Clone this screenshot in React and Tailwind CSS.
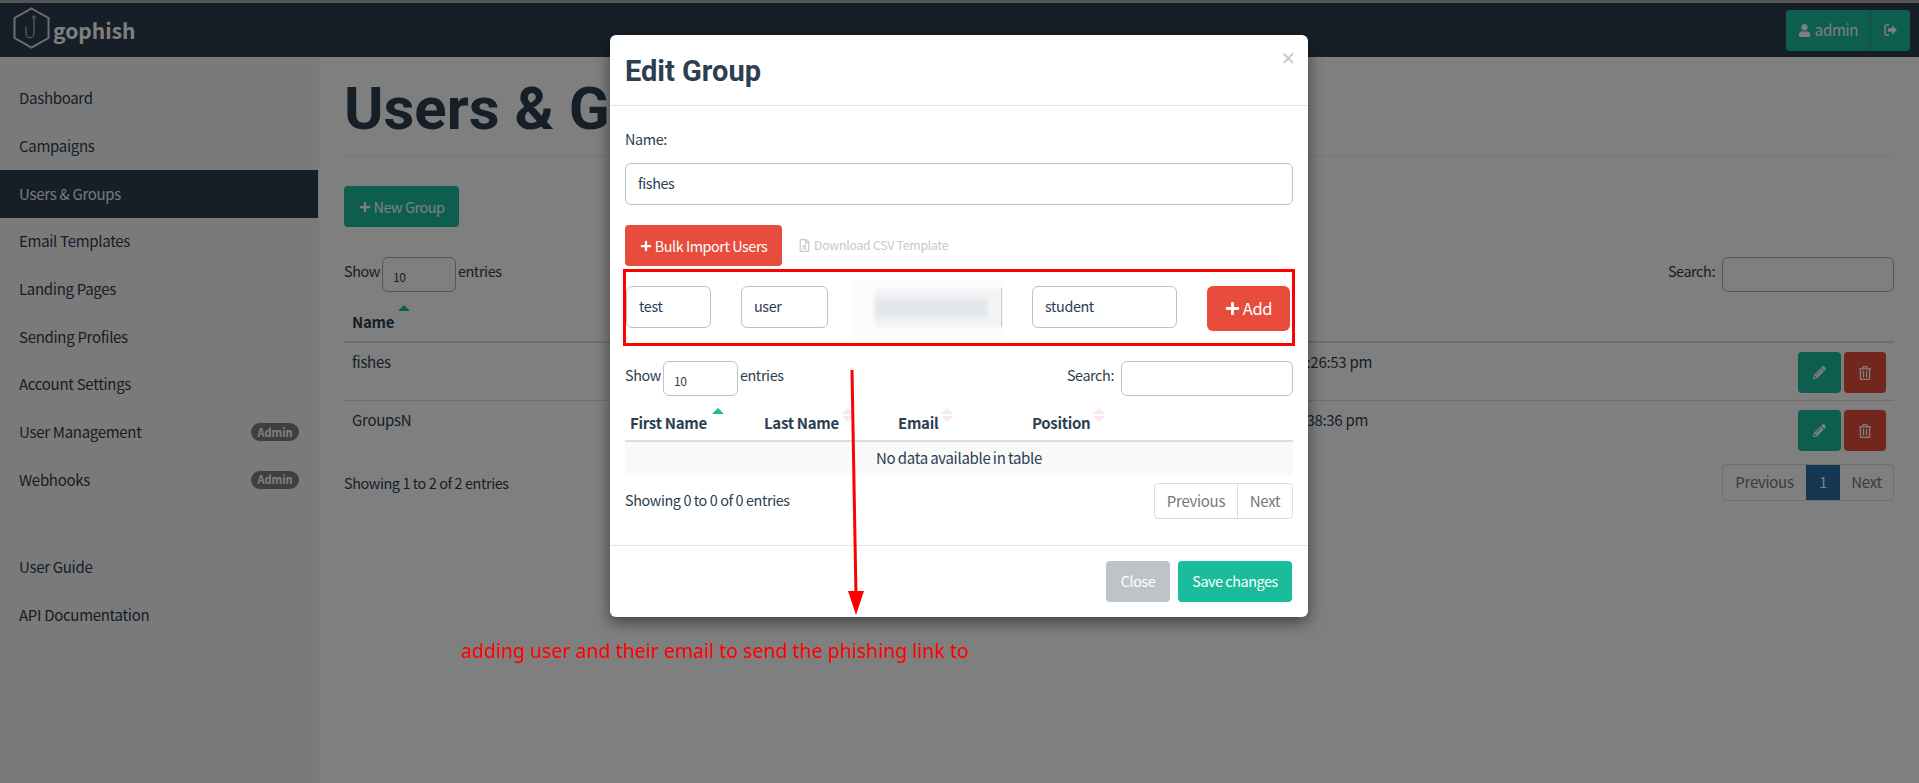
import React from "react";
import { FaPlus, FaUser, FaPencilAlt, FaRegTrashAlt, FaRegFileExcel } from "react-icons/fa";

const ss = "font-['Noto_Sans_CJK_SC','Noto_Sans',sans-serif]";
const base = "text-[15px] tracking-[-0.3px]";
const label = "text-[14.4px] tracking-[-0.4px]";
const btn = "text-[14.4px] tracking-[-0.45px]";

function Logo() {
  return (
    <svg className="mb-[4px]" width="37" height="42" viewBox="0 0 37 42" fill="none" stroke="#dcdcdc">
      <path d="M18.5 1.5 L35.5 11 V31 L18.5 40.5 L1.5 31 V11 Z" strokeWidth="2" />
      <path d="M21 11 V27 C21 32 13 32 13 27 V20" strokeWidth="1" />
      <circle cx="21" cy="10" r="1.3" strokeWidth="0.8" />
    </svg>
  );
}

function LogoutIcon() {
  return (
    <svg width="15" height="14" viewBox="0 0 15 14" fill="none">
      <path d="M6 2H3.5A1.5 1.5 0 0 0 2 3.5v7A1.5 1.5 0 0 0 3.5 12H6" stroke="#ffffff" strokeWidth="1.5" />
      <path d="M5 5.2H9V2.5L14 7L9 11.5V8.8H5Z" fill="#ffffff" />
    </svg>
  );
}

function SortUp({ className = "" }) {
  return <span className={`inline-block w-0 h-0 border-x-[6px] border-x-transparent border-b-[6px] ${className}`} />;
}

function SortBoth() {
  return (
    <span className="absolute -top-[2px] flex flex-col gap-[2px]">
      <span className="w-0 h-0 border-x-[6px] border-x-transparent border-b-[6px] border-b-[#fbe4f5]" />
      <span className="w-0 h-0 border-x-[6px] border-x-transparent border-t-[6px] border-t-[#fbe4f5]" />
    </span>
  );
}

const navTop = ["Dashboard", "Campaigns", "Users & Groups", "Email Templates", "Landing Pages", "Sending Profiles", "Account Settings", "User Management", "Webhooks"];

function Sidebar() {
  return (
    <aside className={`w-[319px] shrink-0 bg-[#f5f5f5] border-r border-[#eeeeee] pt-[17.6px] text-[#2c3e50] ${base}`}>
      {navTop.map((n) => (
        <div key={n} className={`h-[47.7px] flex items-center pl-[19px] pr-[19px] justify-between ${n === "Users & Groups" ? "bg-[#2c3e50] text-[#ecf0f1]" : ""}`}>
          <span>{n}</span>
          {(n === "User Management" || n === "Webhooks") && (
            <span className="w-[48px] h-[18px] rounded-[9px] bg-[#7f7f7f] text-white text-[11px] tracking-normal font-bold flex items-center justify-center leading-none">Admin</span>
          )}
        </div>
      ))}
      <div className="h-[40px]" />
      {["User Guide", "API Documentation"].map((n) => (
        <div key={n} className="h-[47.7px] flex items-center pl-[19px]">{n}</div>
      ))}
    </aside>
  );
}

function Row({ name, date, pad, last }) {
  return (
    <div className={`h-[58px] flex ${last ? "" : "border-b border-[#dddddd]"}`}>
      <div className="w-[960px] pl-[8px] pt-[7.5px]">{name}</div>
      <div className={`w-[68px] pt-[7.5px] whitespace-nowrap flex justify-end ${pad}`}>{date}</div>
      <div className="flex-1 flex justify-end gap-[3px] pt-[9px] pr-[8px]">
        <div className="w-[43px] h-[41px] rounded-[4px] bg-[#1abc9c] flex items-center justify-center text-white"><FaPencilAlt size={13} /></div>
        <div className="w-[42px] h-[41px] rounded-[4px] bg-[#e74c3c] flex items-center justify-center text-white"><FaRegTrashAlt size={14} /></div>
      </div>
    </div>
  );
}

function Main() {
  return (
    <main className={`flex-1 pl-[25px] pr-[25px] text-[#2c3e50] ${base}`}>
      <h1 className="font-['Roboto',sans-serif] font-bold text-[60px] tracking-normal leading-[66px] h-[79px] pt-[19px] box-content border-b border-[#eeeeee] text-[#2c3e50] overflow-hidden whitespace-nowrap">Users &amp; Groups</h1>
      <button className={`mt-[30px] w-[115px] h-[41px] rounded-[4px] bg-[#1abc9c] text-white flex items-center justify-center gap-[3px] ${btn}`}>
        <FaPlus size={12} />New Group
      </button>
      <div className={`mt-[30px] flex justify-between h-[35px] ${label}`}>
        <div className="flex items-start gap-[2px]">
          <span className="leading-[22px] pt-[3px]">Show</span>
          <div className="w-[74px] h-[35px] border border-[#aaaaaa] rounded-[6px] pl-[10px] pt-[9px] text-[12px] leading-[20px]">10</div>
          <span className="leading-[22px] pt-[3px]">entries</span>
        </div>
        <div className="flex items-start gap-[7px]">
          <span className="leading-[22px] pt-[3px]">Search:</span>
          <div className="w-[172px] h-[35px] border border-[#aaaaaa] rounded-[6px]" />
        </div>
      </div>
      <div className="mt-[15px] h-[31px] border-b-2 border-[#dddddd] relative font-bold pl-[8px] leading-[24px] pt-[3px] box-content">
        Name
        <SortUp className="absolute left-[54px] top-[-2px] border-b-[#1abc9c]" />
      </div>
      <Row name="fishes" date=":26:53 pm" pad="" />
      <Row name="GroupsN" date="38:36 pm" pad="pr-[4px]" last />
      <div className="flex justify-between items-center h-[37px] mt-[5px]">
        <span className={label}>Showing 1 to 2 of 2 entries</span>
        <div className="flex h-[37px] border border-[#dddddd] rounded-[4px] text-[#777777]">
          <span className="w-[83px] flex items-center justify-center">Previous</span>
          <span className="w-[34px] flex items-center justify-center bg-[#2c6ea8] text-white">1</span>
          <span className="w-[53px] flex items-center justify-center">Next</span>
        </div>
      </div>
    </main>
  );
}

function Input({ className = "", children }) {
  return <div className={`border border-[#bdc3c7] rounded-[6px] flex items-center pl-[12px] pb-[2px] bg-white text-[#2c3e50] ${label} ${className}`}>{children}</div>;
}

function Modal() {
  return (
    <div className={`absolute left-[610px] top-[35px] w-[698px] h-[582px] bg-white rounded-[6px] shadow-[0_5px_15px_rgba(0,0,0,0.5)] text-[#2c3e50] ${base} ${ss}`}>
      <div className="h-[71px] border-b border-[#e5e5e5] flex justify-between items-start pl-[15px] pr-[12px]">
        <h4 className="font-['Roboto',sans-serif] font-bold text-[29px] tracking-normal leading-[32px] mt-[20px]">Edit Group</h4>
        <span className="font-bold text-[#c4c4c4] text-[16px] leading-none mt-[14px]">×</span>
      </div>
      <div className="px-[15px]">
        <div className={`pt-[22px] leading-[22px] ${label}`}>Name:</div>
        <Input className="mt-[13px] h-[42px]">fishes</Input>
        <div className={`flex items-center mt-[20px] ${btn}`}>
          <button className="w-[157px] h-[41px] rounded-[4px] bg-[#e74c3c] text-white flex items-center justify-center gap-[3px]"><FaPlus size={12} />Bulk Import Users</button>
          <span className="ml-[16px] flex items-center gap-[3px] text-[12.2px] tracking-[-0.2px] text-[#c8c8c8]"><FaRegFileExcel size={13} />Download CSV Template</span>
        </div>
        <div className="flex items-start mt-[20px] h-[42px]">
          <Input className="w-[85px] h-[42px] ml-[1px]">test</Input>
          <Input className="w-[87px] h-[42px] ml-[30px]">user</Input>
          <Input className="w-[149px] h-[42px] ml-[25px]" />
          <Input className="w-[145px] h-[42px] ml-[30px]">student</Input>
          <button className="w-[83px] h-[45px] ml-[30px] rounded-[6px] bg-[#e74c3c] text-white text-[16.5px] tracking-[-0.4px] flex items-center justify-center gap-[3px]"><FaPlus size={15} />Add</button>
        </div>
        <div className={`flex justify-between mt-[33px] h-[35px] ${label}`}>
          <div className="flex items-start gap-[2px]">
            <span className="leading-[22px] pt-[3px]">Show</span>
            <div className="w-[75px] h-[35px] border border-[#bdc3c7] rounded-[6px] pl-[10px] pt-[9px] text-[12px] leading-[20px]">10</div>
            <span className="leading-[22px] pt-[3px]">entries</span>
          </div>
          <div className="flex items-start gap-[7px]">
            <span className="leading-[22px] pt-[3px]">Search:</span>
            <div className="w-[172px] h-[35px] border border-[#bdc3c7] rounded-[6px]" />
          </div>
        </div>
        <div className="mt-[14px] h-[30px] border-b-2 border-[#dddddd] grid grid-cols-[134px_134px_134px_1fr] font-bold pl-[5px] leading-[26px] box-content">
          <span className="relative">First Name<SortUp className="absolute left-[82px] top-[-2px] border-b-[#1abc9c]" /></span>
          <span className="relative">Last Name<span className="absolute left-[78px] top-0"><SortBoth /></span></span>
          <span className="relative">Email<span className="absolute left-[43px] top-0"><SortBoth /></span></span>
          <span className="relative">Position<span className="absolute left-[61px] top-0"><SortBoth /></span></span>
        </div>
        <div className="h-[33px] bg-[#f9f9f9] flex items-center justify-center [word-spacing:-0.7px]">No data available in table</div>
        <div className="flex justify-between items-center mt-[8px] h-[36px]">
          <span className={`pb-[2px] ${label}`}>Showing 0 to 0 of 0 entries</span>
          <div className="flex h-[36px] border border-[#dddddd] rounded-[4px] text-[#777777]">
            <span className="w-[83px] flex items-center justify-center border-r border-[#dddddd]">Previous</span>
            <span className="w-[54px] flex items-center justify-center">Next</span>
          </div>
        </div>
      </div>
      <div className={`mt-[26px] border-t border-[#e5e5e5] flex justify-end gap-[8px] pr-[16px] pt-[15px] ${btn}`}>
        <button className="w-[64px] h-[41px] rounded-[4px] bg-[#bdc3c7] text-white pb-[2px]">Close</button>
        <button className="w-[114px] h-[41px] rounded-[4px] bg-[#1abc9c] text-white pb-[2px]">Save changes</button>
      </div>
      {/* annotation layer */}
      <div className="absolute left-[243px] top-[245px] w-[150px] h-[60px] bg-[#fcfcfc] overflow-hidden">
        <div className="absolute left-[22px] top-[9px] w-[128px] h-[38px] bg-[#f3f4f6] blur-[1px]" />
        <div className="absolute left-[22px] top-[18px] w-[112px] h-[20px] bg-[#e4e7ea] blur-[2px]" />
        <div className="absolute left-[148px] top-[8px] w-px h-[39px] bg-[#c8cbce]" />
      </div>
      <div className="absolute left-[13px] top-[234px] w-[672px] h-[77px] border-[3px] border-[#ff0000]" />
      <svg className="absolute left-[230px] top-[330px]" width="30" height="255" viewBox="0 0 30 255">
        <path d="M12 5 L16 232" stroke="#ff0000" strokeWidth="3" fill="none" />
        <path d="M8 226 L24 226 L16 250 Z" fill="#ff0000" />
      </svg>
    </div>
  );
}

export default function App() {
  return (
    <div className={`relative w-[1919px] h-[783px] overflow-hidden bg-white flex flex-col ${ss}`}>
      <div className="h-[3px] shrink-0 bg-[#aaaaaa]" />
      <header className="h-[54px] shrink-0 bg-[#2c3e50] flex items-center justify-between pl-[13px] pr-[9px]">
        <div className="flex items-center gap-[3px]">
          <Logo />
          <span className="text-[21px] font-bold text-[#ffffff] leading-none mt-[1px]">gophish</span>
        </div>
        <div className={`flex h-[41px] rounded-[4px] bg-[#1abc9c] text-white ${base}`}>
          <span className="w-[85px] flex items-center justify-center gap-[4px] border-r border-[#16a085]"><FaUser size={13} />admin</span>
          <span className="w-[39px] flex items-center justify-center"><LogoutIcon /></span>
        </div>
      </header>
      <div className="flex flex-1">
        <Sidebar />
        <Main />
      </div>
      <div className="absolute inset-0 bg-black/50" />
      <div className="absolute inset-x-0 top-0 h-[3px] bg-[#555555]" />
      <Modal />
      <div className="absolute left-[461px] top-[638px] text-[19.5px] leading-[26px] text-[#ff0000] font-['Noto_Sans',sans-serif] whitespace-nowrap">adding user and their email to send the phishing link to</div>
    </div>
  );
}
